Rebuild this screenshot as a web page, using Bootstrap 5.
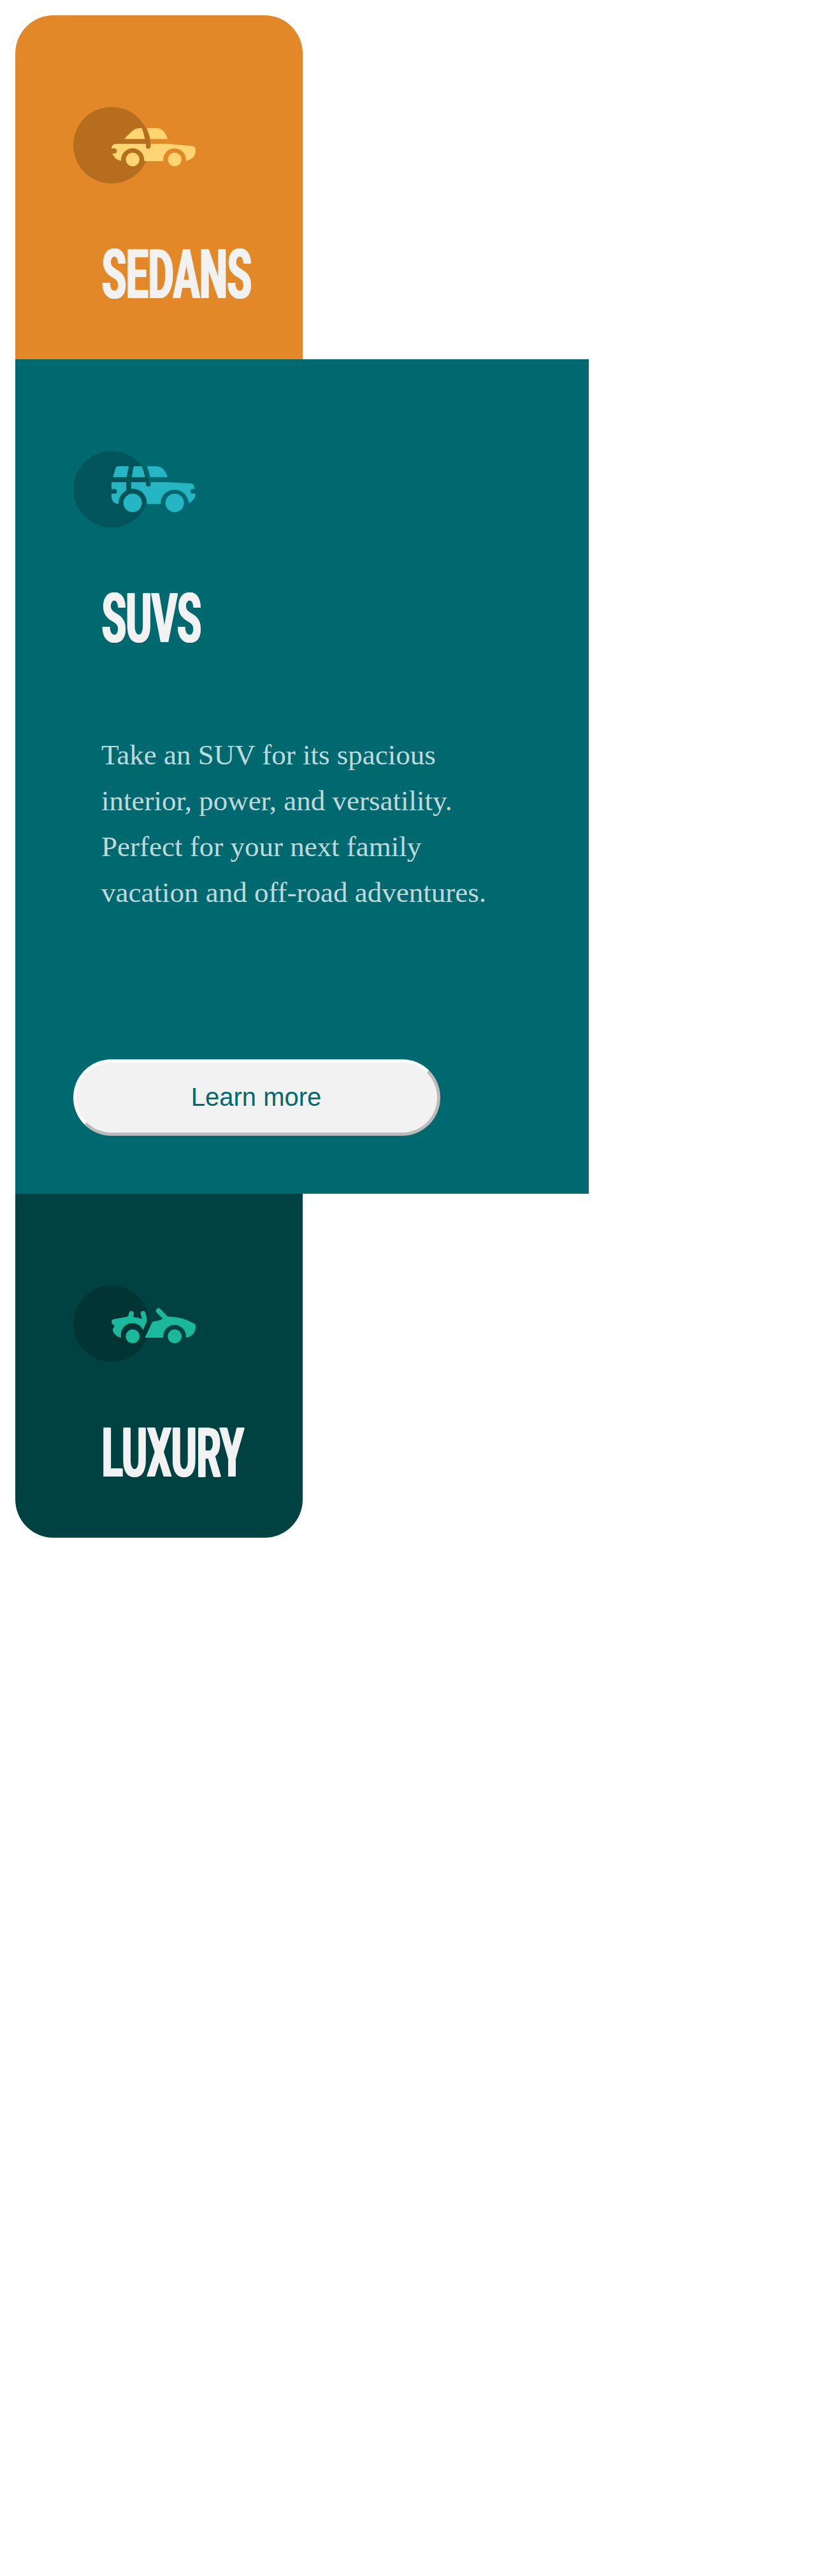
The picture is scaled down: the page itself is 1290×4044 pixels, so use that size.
<!DOCTYPE html>
<html lang="en">
<head>
<meta charset="utf-8">
<meta name="viewport" content="width=device-width, initial-scale=1">
<title>Car categories</title>
<link href="https://cdn.jsdelivr.net/npm/bootstrap@5.3.0/dist/css/bootstrap.min.css" rel="stylesheet">
<style>
  .car-panel { width: 451px; height: 540px; padding: 144px 0 0 91px; }
  .panel-sedans { background: #e28828; border-radius: 60px 60px 0 0; }
  .panel-suvs { background: #006970; width: 900px; height: 1310.4px; }
  .panel-luxury { background: #004241; border-radius: 0 0 60px 60px; }
  .car-icon { width: 192px; height: 120px; }
  .car-title { margin: 89px 0 0 45px; height: 108px; font: 700 108px/1 Roboto, "Liberation Sans", sans-serif; color: #f2f2f2; white-space: nowrap; }
  .car-title span { display: inline-block; transform-origin: 0 50%; text-shadow: 2.5px 0 #f2f2f2, -2.5px 0 #f2f2f2, 1px 0 #f2f2f2, -1px 0 #f2f2f2; }
  .title-sedans { transform: scaleX(.57); }
  .title-suvs { transform: scaleX(.567); }
  .title-luxury { transform: scaleX(.555); }
  .car-text { margin: 124px 0 0 44px; width: 640px; font: 45px/72px "Liberation Serif", serif; color: rgba(255,255,255,.75); }
  .car-btn, .car-btn:hover { margin-top: 226px; width: 576px; height: 120px; padding: 0 2px 3px 0; font: 40px/1 "Liberation Sans", sans-serif; color: #006970; background: #f2f2f2; border: 5px solid; border-color: #fdfdfd #bbb #bbb #fdfdfd; }
</style>
</head>
<body class="bg-white">
<main class="d-flex flex-column align-items-start p-4">
  <section class="car-panel panel-sedans">
    <svg class="car-icon d-block" viewBox="45 54 576 360" aria-hidden="true">
      <circle cx="225" cy="234" r="180" fill="#b66d1e"/>
      <g fill="#ffd473">
        <path d="M284 205L318 171Q336 153 360 153H368Q377 176 382 205Z"/>
        <path d="M391 153H434Q474 153 489 205H407Q402 176 391 153Z"/>
        <path d="M225 249Q227 227 249 227H387V240A12 12 0 0 0 410 240V227H488L603 238Q621 239 621 258Q621 297 576 308V303A54 54 0 0 0 468 303V309H379V303A54 54 0 0 0 270 303V308Q240 302 229 273H238A12 12 0 0 0 238 249Z"/>
        <circle cx="324.500" cy="301" r="32"/><circle cx="522.500" cy="301" r="32"/>
      </g>
      <path d="M368 153H386Q408 192 408 230V240A10.500 10.500 0 0 1 387 240Q390 190 368 153Z" fill="#b66d1e"/>
    </svg>
    <h2 class="car-title"><span class="title-sedans">SEDANS</span></h2>
  </section>
  <section class="car-panel panel-suvs">
    <svg class="car-icon d-block" viewBox="45 54 576 360" aria-hidden="true">
      <circle cx="225" cy="234" r="180" fill="#00545a"/>
      <g fill="#26b5c2">
        <path d="M232 177L244 136Q247 126 257 126H306L296 177Z"/>
        <path d="M329 126H368Q378 149 383 177H320Z"/>
        <path d="M392 126H434Q474 126 489 177H407Q402 149 392 126Z"/>
        <path d="M225 201H294V240Q258 262 258 300V304Q225 300 225 267V255H240A11 11 0 0 0 240 233H225Z"/>
        <path d="M318 201H387V213A12 12 0 0 0 410 213V201H488L600 207Q608 207 611 214Q615 221 616 233H608A11 11 0 0 0 608 255H621Q619 285 588 300A66 66 0 0 0 456 304H391A66 66 0 0 0 318 232Z"/>
        <circle cx="324.500" cy="298.500" r="43.500"/><circle cx="522.500" cy="298.500" r="43.500"/>
      </g>
    </svg>
    <h2 class="car-title"><span class="title-suvs">SUVS</span></h2>
    <p class="car-text">Take an SUV for its spacious<br>interior, power, and versatility.<br>Perfect for your next family<br>vacation and off-road adventures.</p>
    <button type="button" class="btn car-btn rounded-pill">Learn more</button>
  </section>
  <section class="car-panel panel-luxury">
    <svg class="car-icon d-block" viewBox="45 54 576 360" aria-hidden="true">
      <circle cx="225" cy="234" r="180" fill="#003534"/>
      <g fill="#1ab89d">
        <path d="M225 224Q226 214 238 212L300 201Q306 197 307 186A11.500 11.500 0 0 1 330 186L328 203Q350 204 369 212L363 191A11.500 11.500 0 0 1 384 181Q391 198 392 220L373 264A54 54 0 0 0 270 294V300Q244 294 232 271Q229 264 232 257L240 246L229 235Q225 230 225 224Z"/>
        <path d="M382 300L418 225Q447 222 466 211L438 182A12 12 0 0 1 455 165L490 201Q555 199 616 235Q621 238 621 248Q620 290 576 300V294A54 54 0 0 0 468 294V300Z"/>
        <circle cx="324.500" cy="293.500" r="32.500"/><circle cx="522.500" cy="293.500" r="32.500"/>
      </g>
    </svg>
    <h2 class="car-title"><span class="title-luxury">LUXURY</span></h2>
  </section>
</main>
<script src="https://cdn.jsdelivr.net/npm/bootstrap@5.3.0/dist/js/bootstrap.bundle.min.js"></script>
</body>
</html>
